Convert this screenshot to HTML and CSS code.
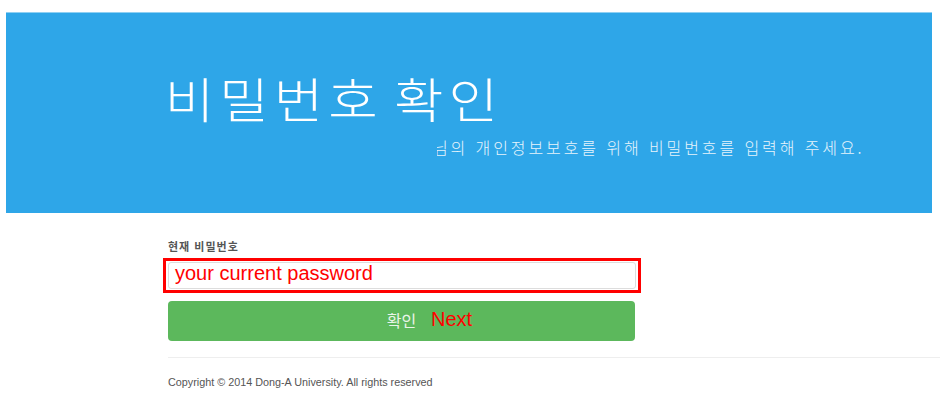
FILE: index.html
```html
<!DOCTYPE html>
<html lang="ko">
<head>
<meta charset="utf-8">
<title>비밀번호 확인</title>
<link rel="stylesheet" href="styles.css">
</head>
<body>
<header class="banner">
  <h1 class="title">비밀번호 확인</h1>
  <p class="subtitle"><span class="sub-clip"><span class="sub-text">님의 개인정보보호를 위해 비밀번호를 입력해 주세요.</span></span></p>
</header>
<main class="content">
  <label class="label" for="pw">현재 비밀번호</label>
  <div class="highlight">
    <div class="input" id="pw">your current password</div>
  </div>
  <button class="btn" type="button"><span class="btn-ko">확인</span><span class="btn-en">Next</span></button>
  <hr class="rule">
  <p class="copy">Copyright © 2014 Dong-A University. All rights reserved</p>
</main>
</body>
</html>
```
FILE: styles.css
```css
html, body {
  margin: 0;
  padding: 0;
  background: #fff;
}
body {
  font-family: "Noto Sans CJK KR", "Noto Sans", sans-serif;
  width: 940px;
  height: 413px;
  overflow: hidden;
}
.banner {
  margin: 12px 0 0 6px;
  width: 926px;
  height: 201px;
  background: #2ea6e8;
  border-top: 1px solid #8fd0f3;
  box-sizing: border-box;
  padding-top: 52px;
}
.title {
  display: block;
  width: max-content;
  margin: 0 0 0 160px;
  font-family: "Noto Sans CJK KR", sans-serif;
  font-weight: 300;
  font-size: 48px;
  line-height: 64px;
  letter-spacing: 4.5px;
  word-spacing: -8px;
  color: #fff;
  transform: scaleX(1.12);
  transform-origin: 10px 50%;
}
.subtitle {
  margin: 6px 0 0 431px;
  height: 24px;
}
.sub-clip {
  display: inline-block;
  overflow: hidden;
  width: 480px;
  height: 24px;
  white-space: nowrap;
}
.sub-text {
  display: inline-block;
  margin-left: -4px;
  font-family: "Noto Sans CJK KR", sans-serif;
  font-weight: 300;
  font-size: 16px;
  line-height: 24px;
  letter-spacing: 2.9px;
  color: #e6f4fc;
}
.content {
  margin-left: 163px;
  padding-top: 26px;
}
.label {
  display: block;
  margin-left: 5px;
  font-family: "Noto Sans CJK KR", sans-serif;
  font-weight: 700;
  font-size: 11px;
  line-height: 14px;
  letter-spacing: 1px;
  color: #555;
}
.highlight {
  margin-top: 5px;
  width: 478px;
  height: 35px;
  box-sizing: border-box;
  border: 3px solid #f00;
  padding: 1px 2px;
}
.input {
  height: 27px;
  box-sizing: border-box;
  border: 1px solid #ddd;
  border-radius: 3px;
  padding-left: 6px;
  font-family: "Liberation Sans", Arial, sans-serif;
  font-size: 20px;
  line-height: 21px;
  color: #f00;
}
.btn {
  position: relative;
  display: flex;
  justify-content: center;
  align-items: center;
  margin: 8px 0 0 5px;
  width: 467px;
  height: 40px;
  padding: 0 0 2px 0;
  border: 0;
  border-radius: 4px;
  background: #5cb85c;
}
.btn-ko {
  font-family: "Noto Sans CJK KR", sans-serif;
  font-size: 16px;
  color: #e8f4e8;
}
.btn-en {
  position: absolute;
  left: 263px;
  top: 6px;
  font-family: "Liberation Sans", Arial, sans-serif;
  font-size: 20px;
  line-height: 24px;
  color: #f00;
}
.rule {
  margin: 16px 0 0 5px;
  border: 0;
  border-top: 1px solid #eee;
  height: 0;
  width: 772px;
}
.copy {
  margin: 17px 0 0 5px;
  font-family: "Liberation Sans", Arial, sans-serif;
  font-size: 10.8px;
  line-height: 14px;
  color: #555;
}
```
